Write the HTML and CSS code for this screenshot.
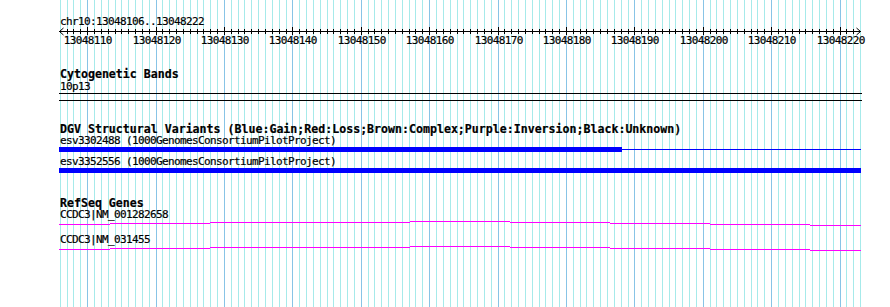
FILE: index.html
```html
<!DOCTYPE html>
<html>
<head>
    <title>chr10:13048106..13048222</title>
    <meta charset="utf-8">
    <link rel="stylesheet" href="styles.css">
</head>
<body>
    <div class="panel">
        <svg class="tracks" width="890" height="307" viewBox="0 0 890 307">
            <!-- grid lines, filled in by the script below -->
            <g id="grid"></g>

            <!-- ruler -->
            <g class="ruler">
                <text class="label" x="60" y="25">chr10:13048106..13048222</text>
                <line class="ruler-line" x1="59" y1="31.5" x2="861" y2="31.5"/>
                <path class="arrow" d="M63.5 28 L59.5 31.5 L63.5 35"/>
                <path class="arrow" d="M856.5 28 L860.5 31.5 L856.5 35"/>
                <g id="ticks"></g>
                <g id="tick-labels"></g>
            </g>

            <!-- Cytogenetic Bands -->
            <g class="track">
                <text class="track-title" x="60" y="78">Cytogenetic Bands</text>
                <text class="label" x="60" y="89.5">10p13</text>
                <line class="band" x1="59" y1="93.5" x2="862" y2="93.5"/>
                <line class="band" x1="59" y1="100.5" x2="862" y2="100.5"/>
            </g>

            <!-- DGV -->
            <g class="track">
                <text class="track-title" x="60" y="133">DGV Structural Variants (Blue:Gain;Red:Loss;Brown:Complex;Purple:Inversion;Black:Unknown)</text>
                <text class="label" x="60" y="144.3">esv3302488 (1000GenomesConsortiumPilotProject)</text>
                <rect class="gain" x="59" y="147" width="563" height="5"/>
                <line class="gain-line" x1="622" y1="149.5" x2="861" y2="149.5"/>
                <text class="label" x="60" y="165">esv3352556 (1000GenomesConsortiumPilotProject)</text>
                <rect class="gain" x="59" y="168" width="802" height="5"/>
            </g>

            <!-- RefSeq Genes -->
            <g class="track">
                <text class="track-title" x="60" y="206.5">RefSeq Genes</text>
                <text class="label" x="60" y="218.3">CCDC3|NM_001282658</text>
                <g id="gene-1"></g>
                <text class="label" x="60" y="243.3">CCDC3|NM_031455</text>
                <g id="gene-2"></g>
            </g>
        </svg>
    </div>

    <script>
        var NS = "http://www.w3.org/2000/svg";
        var start = 13048106; // first base shown
        var bases = 118;
        var left = 59.8;      // pixel of first base
        var step = 6.84;      // pixels per base

        function el(name, attrs, parent) {
            var node = document.createElementNS(NS, name);
            for (var k in attrs) {
                node.setAttribute(k, attrs[k]);
            }
            parent.appendChild(node);
            return node;
        }

        var grid = document.getElementById("grid");
        var ticks = document.getElementById("ticks");
        var labels = document.getElementById("tick-labels");

        for (var i = 0; i < bases; i++) {
            var pos = start + i;
            var x = Math.round(left + i * step) + 0.5;
            var major = pos % 10 === 0;

            el("line", {x1: x, y1: 0, x2: x, y2: 307, "class": major ? "grid-major" : "grid-minor"}, grid);

            if (i > 0 && i < bases - 1) {
                el("line", {x1: x, y1: major ? 27 : 28.5, x2: x, y2: major ? 35 : 34, "class": "tick"}, ticks);
            }

            if (major) {
                var t = el("text", {x: x + 0.3, y: 44, "class": "label tick-label"}, labels);
                t.textContent = pos;
            }
        }

        // gene models: 100px segments stepping up then down
        var edges = [59, 110, 210, 310, 410, 510, 610, 710, 810, 861];
        var rows = [224, 223, 222, 221.7, 220.7, 222, 223, 224, 225];

        function drawGene(id, offset) {
            var g = document.getElementById(id);
            for (var j = 0; j < rows.length; j++) {
                var y = Math.round(rows[j] + offset) + 0.5;
                el("line", {x1: edges[j], y1: y, x2: edges[j + 1], y2: y, "class": "gene"}, g);
            }
        }

        drawGene("gene-1", 0);
        drawGene("gene-2", 25);
    </script>
</body>
</html>
```

FILE: styles.css
```css
body {
    margin: 0;
    padding: 0;
    background-color: #fff;
}

.panel {
    width: 890px;
    height: 307px;
}

.tracks {
    display: block;
}

.tracks text {
    font-family: "DejaVu Sans Mono", "Liberation Mono", monospace;
    fill: #000;
    stroke: #000;
    stroke-width: 0.2px;
}

.label {
    font-size: 11px;
    letter-spacing: -0.62px;
}

.tick-label {
    text-anchor: middle;
}

.track-title {
    font-size: 11.6px;
    font-weight: bold;
}

.grid-minor {
    stroke: #a6eaea;
    stroke-width: 1;
    shape-rendering: crispEdges;
}

.grid-major {
    stroke: #88c4e6;
    stroke-width: 1;
    shape-rendering: crispEdges;
}

.ruler-line, .tick, .band {
    stroke: #000;
    stroke-width: 1;
    shape-rendering: crispEdges;
}

.arrow {
    fill: none;
    stroke: #000;
    stroke-width: 1;
}

.gain {
    fill: #0000ff;
    shape-rendering: crispEdges;
}

.gain-line {
    stroke: #0000ff;
    stroke-width: 1;
    shape-rendering: crispEdges;
}

.gene {
    stroke: #ff00ff;
    stroke-width: 1.2;
    shape-rendering: crispEdges;
}
```
